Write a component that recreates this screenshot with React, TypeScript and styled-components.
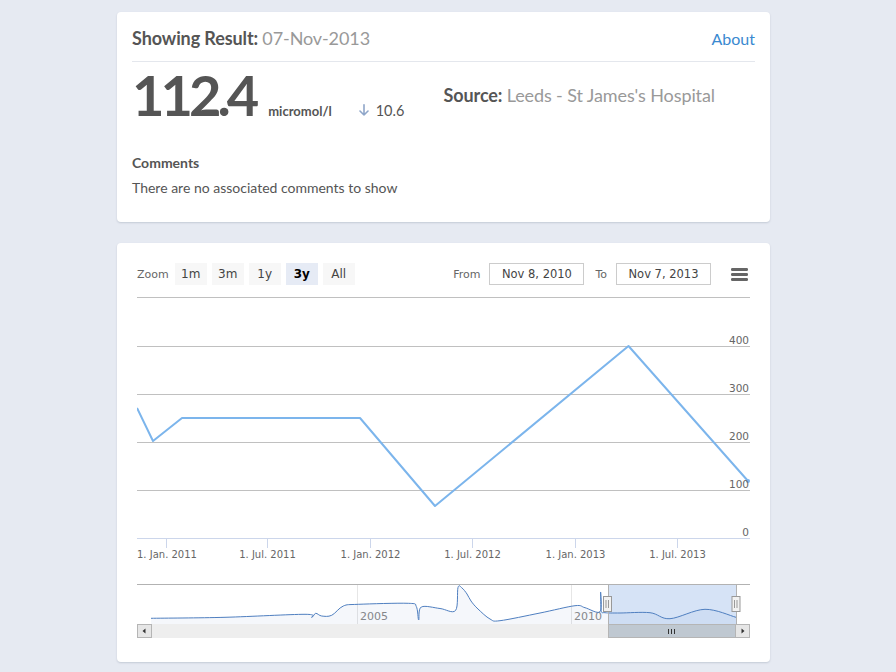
import React from "react";
import styled, { createGlobalStyle } from "styled-components";

const GlobalStyle = createGlobalStyle`
  html, body { margin: 0; padding: 0; background: #e6eaf2; }
  body { font-family: Lato, "Open Sans", sans-serif; color: #555; }
  * { box-sizing: border-box; }
`;

const Page = styled.div`
  min-height: 672px;
  padding: 12px 126px 12px 117px;
  display: flex;
  flex-direction: column;
  gap: 21px;
`;

const Card = styled.section`
  background: #fff;
  border-radius: 4px;
  box-shadow: 0 1px 2px rgba(60, 75, 100, 0.2);
`;

const ResultCard = styled(Card)`
  padding: 13px 15px 24px;
`;

const Header = styled.div`
  display: flex;
  justify-content: space-between;
  align-items: baseline;
  padding-bottom: 9px;
  border-bottom: 1px solid #e4e7ed;
  line-height: 26px;
`;

const Title = styled.h2`
  margin: 0;
  font-size: 18px;
  font-weight: 700;
  color: #555;
  letter-spacing: -0.1px;
`;

const Muted = styled.span`
  font-weight: 400;
  color: #999;
`;

const AboutLink = styled.a`
  font-size: 16px;
  color: #3a89d0;
  text-decoration: none;
`;

const Summary = styled.div`
  display: grid;
  grid-template-columns: 1fr 1fr;
  padding-top: 5px;
`;

const ValueRow = styled.div`
  display: flex;
  align-items: baseline;
`;

const BigValue = styled.span`
  font-size: 56px;
  line-height: 56px;
  font-weight: 700;
  letter-spacing: -4px;
  color: #555;
`;

const Unit = styled.span`
  margin-left: 13px;
  font-size: 13px;
  font-weight: 700;
  line-height: 20px;
`;

const Change = styled.span`
  margin-left: 27px;
  display: inline-flex;
  align-items: baseline;
  gap: 7px;
  font-size: 14.5px;
  line-height: 20px;
  color: #555;
`;

const Source = styled.div`
  margin-top: 15px;
  font-size: 18px;
  line-height: 26px;
  font-weight: 700;
  letter-spacing: -0.1px;
`;

const Comments = styled.div`
  margin-top: 30px;
  font-size: 14px;
  line-height: 20px;
`;

const CommentsTitle = styled.h3`
  margin: 0;
  font-size: 14px;
  font-weight: 700;
  line-height: 20px;
  color: #555;
`;

const CommentsText = styled.p`
  margin: 5px 0 0;
  color: #555;
`;

const ChartCard = styled(Card)`
  padding: 20px 20px 24px;
`;

const Toolbar = styled.div`
  display: flex;
  align-items: center;
  height: 22px;
  font-family: "DejaVu Sans", Verdana, sans-serif;
`;

const ToolLabel = styled.span<{ $ml?: number; $mr?: number }>`
  font-size: 11px;
  color: #666;
  margin-left: ${(p) => p.$ml ?? 0}px;
  margin-right: ${(p) => p.$mr ?? 0}px;
`;

const RangeButton = styled.button<{ $active?: boolean }>`
  width: 32px;
  height: 22px;
  margin-left: 5px;
  padding: 0;
  border: 0;
  border-radius: 0;
  background: ${(p) => (p.$active ? "#e6ebf5" : "#f7f7f7")};
  color: ${(p) => (p.$active ? "#000" : "#444")};
  font-weight: ${(p) => (p.$active ? 700 : 400)};
  font-family: inherit;
  font-size: 12px;
  &:first-of-type { margin-left: 6px; }
`;

const Spacer = styled.div`
  flex: 1;
`;

const DateInput = styled.input`
  width: 95px;
  height: 22px;
  border: 1px solid #cccccc;
  padding: 0;
  text-align: center;
  font-family: inherit;
  font-size: 11.5px;
  color: #444;
  background: #fff;
  outline: none;
`;

const MenuIcon = styled.svg`
  margin-left: 20px;
  margin-right: 2px;
  display: block;
`;

const ChartSvg = styled.svg`
  display: block;
  margin-top: 12px;
  font-family: "DejaVu Sans", Verdana, sans-serif;
`;

type Pt = [number, number];

function smoothPath(pts: Pt[]): string {
  let d = `M${pts[0][0]},${pts[0][1]}`;
  for (let i = 0; i < pts.length - 1; i++) {
    const p0 = pts[i - 1] || pts[i];
    const p1 = pts[i];
    const p2 = pts[i + 1];
    const p3 = pts[i + 2] || p2;
    const t = 1 / 6;
    const c1 = [p1[0] + (p2[0] - p0[0]) * t, p1[1] + (p2[1] - p0[1]) * t];
    const c2 = [p2[0] - (p3[0] - p1[0]) * t, p2[1] - (p3[1] - p1[1]) * t];
    d += ` C${c1[0].toFixed(1)},${c1[1].toFixed(1)} ${c2[0].toFixed(1)},${c2[1].toFixed(1)} ${p2[0]},${p2[1]}`;
  }
  return d;
}

const seriesPts: Pt[] = [
  [0, 111], [16, 144], [45, 121], [223, 121], [298, 209], [491.5, 49], [611, 184],
];

const navPts: Pt[] = [
  [14, 321.3], [88, 320.3], [168, 317.3], [174.7, 320.3], [178.7, 316.3], [184.7, 319],
  [194.7, 318.3], [206.3, 309], [221.3, 307.3], [271.3, 306.3], [279.3, 309.5],
  [281.7, 323], [284.3, 310], [303, 311.5], [318.5, 313.5], [321, 290.5], [325, 291],
  [330, 297], [334, 304], [341, 312], [353, 322], [363, 323.7], [403, 316], [438, 308.7],
  [448, 310.7], [463, 314.7], [463.6, 295], [464.2, 313.5], [468, 315.7], [483, 316],
  [513, 315.7], [533, 321.7], [568, 312.3], [599, 320.3],
];

const gridYs = [0.5, 49.5, 97.5, 145.5, 193.5];
const yLabels: [string, number][] = [
  ["400", 47], ["300", 95], ["200", 143], ["100", 191], ["0", 239],
];
const xTicks: [string, number][] = [
  ["1. Jan. 2011", 29.5], ["1. Jul. 2011", 130.5], ["1. Jan. 2012", 233.5],
  ["1. Jul. 2012", 335.5], ["1. Jan. 2013", 438.5], ["1. Jul. 2013", 540.5],
];

function Handle({ x }: { x: number }) {
  return (
    <g>
      <rect x={x - 3.5} y={299.5} width={8} height={15} fill="#f2f2f2" stroke="#999" />
      <line x1={x - 1} y1={303} x2={x - 1} y2={311} stroke="#999" />
      <line x1={x + 1.5} y1={303} x2={x + 1.5} y2={311} stroke="#999" />
    </g>
  );
}

function Chart() {
  const navLine = smoothPath(navPts);
  const navArea = `${navLine} L599,327 L14,327 Z`;
  const mainLine = "M" + seriesPts.map((p) => p.join(",")).join(" L");
  return (
    <ChartSvg width={613} height={341} viewBox="0 0 613 341">
      {gridYs.map((y) => (
        <line key={y} x1={0} x2={613} y1={y} y2={y} stroke="#c0c0c0" />
      ))}
      <line x1={0} x2={613} y1={241.5} y2={241.5} stroke="#ccd6eb" />
      {xTicks.map(([, x]) => (
        <line key={x} x1={x} x2={x} y1={241} y2={251} stroke="#ccd6eb" />
      ))}
      {xTicks.map(([label, x], i) => (
        <text
          key={label}
          x={i === 0 ? 0 : x}
          y={261}
          textAnchor={i === 0 ? "start" : "middle"}
          fontSize={10}
          fill="#666"
        >
          {label}
        </text>
      ))}
      <path d={mainLine} fill="none" stroke="#7cb5ec" strokeWidth={2} strokeLinejoin="round" />
      <circle cx={611} cy={184} r={2} fill="#7cb5ec" />
      {yLabels.map(([label, y]) => (
        <text key={label} x={612} y={y} textAnchor="end" fontSize={10.5} fill="#666">
          {label}
        </text>
      ))}

      {/* navigator */}
      <line x1={220.5} x2={220.5} y1={287} y2={327} stroke="#e6e6e6" />
      <line x1={434.5} x2={434.5} y1={287} y2={327} stroke="#e6e6e6" />
      <text x={223} y={323} fontSize={11} fill="#888">2005</text>
      <text x={437} y={323} fontSize={11} fill="#888">2010</text>
      <path d={navArea} fill="#4f7fc0" fillOpacity={0.06} />
      <rect x={471} y={287} width={128} height={40} fill="rgba(102,153,221,0.27)" />
      <path d={navLine} fill="none" stroke="#4f7fc0" strokeWidth={1} />
      <line x1={0} x2={613} y1={287.5} y2={287.5} stroke="#b2b2b2" />
      <line x1={471.5} x2={471.5} y1={287} y2={327} stroke="#b2b2b2" />
      <line x1={599.5} x2={599.5} y1={287} y2={327} stroke="#b2b2b2" />
      <Handle x={470} />
      <Handle x={598.5} />

      {/* scrollbar */}
      <rect x={0} y={327} width={613} height={14} fill="#eeeeee" />
      <rect x={471.5} y={327.5} width={127} height={13} fill="#bfc8d1" stroke="#b5b5b5" />
      <line x1={531.5} x2={531.5} y1={332} y2={337} stroke="#333" />
      <line x1={534.5} x2={534.5} y1={332} y2={337} stroke="#333" />
      <line x1={537.5} x2={537.5} y1={332} y2={337} stroke="#333" />
      <rect x={0.5} y={327.5} width={14} height={13} fill="#e6e6e6" stroke="#b5b5b5" />
      <path d="M5.5,334 L8.5,331.5 L8.5,336.5 Z" fill="#333" />
      <rect x={598.5} y={327.5} width={14} height={13} fill="#e6e6e6" stroke="#b5b5b5" />
      <path d="M607.5,334 L604.5,331.5 L604.5,336.5 Z" fill="#333" />
    </ChartSvg>
  );
}

export default function App() {
  return (
    <>
      <GlobalStyle />
      <Page>
        <ResultCard>
          <Header>
            <Title>
              Showing Result: <Muted>07-Nov-2013</Muted>
            </Title>
            <AboutLink href="#">About</AboutLink>
          </Header>
          <Summary>
            <ValueRow>
              <BigValue>112.4</BigValue>
              <Unit>micromol/l</Unit>
              <Change>
                <svg width="10" height="12" viewBox="0 0 10 12">
                  <path
                    d="M5 0.8 V11 M1 7 L5 11 L9 7"
                    fill="none"
                    stroke="#8fa6c9"
                    strokeWidth="1.6"
                    strokeLinecap="round"
                    strokeLinejoin="round"
                  />
                </svg>
                10.6
              </Change>
            </ValueRow>
            <Source>
              Source: <Muted>Leeds - St James's Hospital</Muted>
            </Source>
          </Summary>
          <Comments>
            <CommentsTitle>Comments</CommentsTitle>
            <CommentsText>There are no associated comments to show</CommentsText>
          </Comments>
        </ResultCard>
        <ChartCard>
          <Toolbar>
            <ToolLabel>Zoom</ToolLabel>
            <RangeButton>1m</RangeButton>
            <RangeButton>3m</RangeButton>
            <RangeButton>1y</RangeButton>
            <RangeButton $active>3y</RangeButton>
            <RangeButton>All</RangeButton>
            <Spacer />
            <ToolLabel $mr={9}>From</ToolLabel>
            <DateInput readOnly value="Nov 8, 2010" />
            <ToolLabel $ml={11} $mr={9}>To</ToolLabel>
            <DateInput readOnly value="Nov 7, 2013" />
            <MenuIcon width="17" height="13" viewBox="0 0 17 13">
              <rect x="0" y="0" width="17" height="3" rx="1.2" fill="#666" />
              <rect x="0" y="5" width="17" height="3" rx="1.2" fill="#666" />
              <rect x="0" y="10" width="17" height="3" rx="1.2" fill="#666" />
            </MenuIcon>
          </Toolbar>
          <Chart />
        </ChartCard>
      </Page>
    </>
  );
}
